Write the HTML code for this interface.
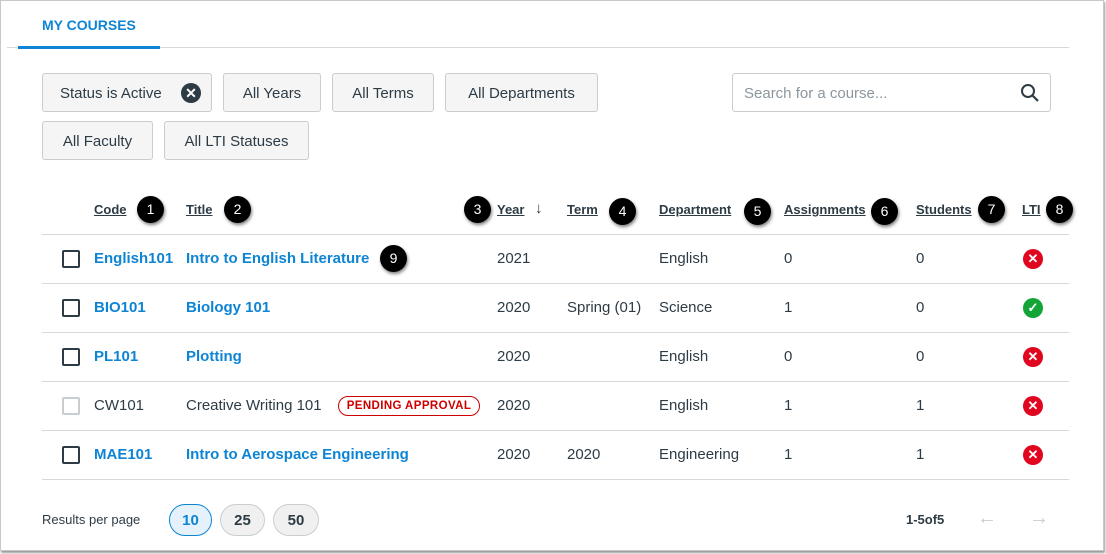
<!DOCTYPE html><html><head><style>
body{margin:0;width:1106px;height:554px;background:#fff;font-family:"Liberation Sans",sans-serif;position:relative;overflow:hidden;color:#2d3b45}
.f{position:absolute;left:0;top:0;width:1102px;height:549px;border:1px solid #c8c8c8;box-shadow:1px 2px 2px #999}
.a{position:absolute;white-space:nowrap}
.btn{position:absolute;height:37px;top:73px;background:#f5f5f5;border:1px solid #c7cdd1;border-radius:3px;font-size:15px;line-height:39px;text-align:center;color:#2d3b45}
.h{position:absolute;top:202px;font-size:13px;font-weight:bold;text-decoration:underline;color:#2d3b45}
.b{position:absolute;width:27px;height:27px;border-radius:50%;background:#000;color:#fff;font-size:14px;text-align:center;line-height:27px;box-shadow:1px 2px 3px rgba(0,0,0,.5)}
.ln{position:absolute;left:42px;width:1027px;height:1px;background:#d5d9dc}
.c{position:absolute;font-size:15px;margin-top:1px}
.bl{color:#0e84d4;font-weight:bold}
.cb{position:absolute;left:62px;width:14px;height:14px;border:2px solid #2d3b45;border-radius:2px}
.x{position:absolute;left:1023px;width:20px;height:20px;border-radius:50%;background:#e0061f;color:#fff;font-size:13px;font-weight:bold;text-align:center;line-height:20px}
.pill{position:absolute;top:504px;height:30px;border:1px solid #c7cdd1;background:#f0f0f0;border-radius:16px;font-size:15px;line-height:31px;text-align:center;font-weight:bold}
</style></head><body><div class="f"></div>
<div class="a" style="left:42px;top:17px;font-size:14px;font-weight:bold;color:#0e84d4">MY COURSES</div>
<div class="a" style="left:7px;top:47px;width:1062px;height:1px;background:#d5d9dc"></div>
<div class="a" style="left:18px;top:46px;width:142px;height:3px;background:#0e84d4"></div>
<div class="btn" style="left:42px;width:168px;text-align:left"><span style="margin-left:17px">Status is Active</span><span style="position:absolute;left:138px;top:9px;width:20px;height:20px;border-radius:50%;background:#2d3b45;color:#fff;font-size:14px;line-height:20px;text-align:center;font-weight:bold">✕</span></div>
<div class="btn" style="left:223px;width:96px">All Years</div>
<div class="btn" style="left:332px;width:100px">All Terms</div>
<div class="btn" style="left:445px;width:151px">All Departments</div>
<div class="btn" style="left:42px;top:121px;width:109px">All Faculty</div>
<div class="btn" style="left:164px;top:121px;width:143px">All LTI Statuses</div>
<div class="a" style="left:732px;top:73px;width:317px;height:37px;border:1px solid #c7cdd1;border-radius:3px"><span style="position:absolute;left:11px;top:11px;font-size:15px;color:#8b969e">Search for a course...</span>
<svg style="position:absolute;right:10px;top:9px" width="20" height="20" viewBox="0 0 20 20"><circle cx="8" cy="8" r="6" fill="none" stroke="#2d3b45" stroke-width="2"/><path d="M12.5 12.5L18 18" stroke="#2d3b45" stroke-width="2.2"/></svg></div>
<div class="h" style="left:94px">Code</div><div class="h" style="left:186px">Title</div><div class="h" style="left:497px">Year</div>
<div class="a" style="left:535px;top:200px;font-size:15px">↓</div>
<div class="h" style="left:567px">Term</div><div class="h" style="left:659px">Department</div><div class="h" style="left:784px">Assignments</div><div class="h" style="left:916px">Students</div><div class="h" style="left:1022px">LTI</div>
<div class="b" style="left:137px;top:196px">1</div><div class="b" style="left:224px;top:196px">2</div><div class="b" style="left:464px;top:196px">3</div><div class="b" style="left:609px;top:198px">4</div><div class="b" style="left:744px;top:198px">5</div><div class="b" style="left:871px;top:198px">6</div><div class="b" style="left:978px;top:196px">7</div><div class="b" style="left:1046px;top:196px">8</div><div class="b" style="left:380px;top:245px">9</div>
<div class="ln" style="top:234px"></div><div class="ln" style="top:283px"></div><div class="ln" style="top:332px"></div><div class="ln" style="top:381px"></div><div class="ln" style="top:430px"></div><div class="ln" style="top:479px"></div>
<div class="cb" style="top:250px"></div><div class="c bl" style="left:94px;top:249px">English101</div><div class="c bl" style="left:186px;top:249px">Intro to English Literature</div><div class="c" style="left:497px;top:249px">2021</div><div class="c" style="left:659px;top:249px">English</div><div class="c" style="left:784px;top:249px">0</div><div class="c" style="left:916px;top:249px">0</div><div class="x" style="top:249px">✕</div>
<div class="cb" style="top:299px"></div><div class="c bl" style="left:94px;top:298px">BIO101</div><div class="c bl" style="left:186px;top:298px">Biology 101</div><div class="c" style="left:497px;top:298px">2020</div><div class="c" style="left:567px;top:298px">Spring (01)</div><div class="c" style="left:659px;top:298px">Science</div><div class="c" style="left:784px;top:298px">1</div><div class="c" style="left:916px;top:298px">0</div><div class="x" style="top:298px;background:#13a538">✓</div>
<div class="cb" style="top:348px"></div><div class="c bl" style="left:94px;top:347px">PL101</div><div class="c bl" style="left:186px;top:347px">Plotting</div><div class="c" style="left:497px;top:347px">2020</div><div class="c" style="left:659px;top:347px">English</div><div class="c" style="left:784px;top:347px">0</div><div class="c" style="left:916px;top:347px">0</div><div class="x" style="top:347px">✕</div>
<div class="cb" style="top:397px;border-color:#c7cdd1"></div><div class="c" style="left:94px;top:396px">CW101</div><div class="c" style="left:186px;top:396px">Creative Writing 101</div>
<div class="a" style="left:338px;top:396px;height:18px;width:126px;padding:0 7px;border:1px solid #c00;border-radius:10px;color:#c00;font-size:11.5px;font-weight:bold;line-height:19px;letter-spacing:.4px;text-align:center">PENDING APPROVAL</div>
<div class="c" style="left:497px;top:396px">2020</div><div class="c" style="left:659px;top:396px">English</div><div class="c" style="left:784px;top:396px">1</div><div class="c" style="left:916px;top:396px">1</div><div class="x" style="top:396px">✕</div>
<div class="cb" style="top:446px"></div><div class="c bl" style="left:94px;top:445px">MAE101</div><div class="c bl" style="left:186px;top:445px">Intro to Aerospace Engineering</div><div class="c" style="left:497px;top:445px">2020</div><div class="c" style="left:567px;top:445px">2020</div><div class="c" style="left:659px;top:445px">Engineering</div><div class="c" style="left:784px;top:445px">1</div><div class="c" style="left:916px;top:445px">1</div><div class="x" style="top:445px">✕</div>
<div class="a" style="left:42px;top:512px;font-size:13px">Results per page</div>
<div class="pill" style="left:169px;width:41px;background:#e5f2fc;border-color:#0e84d4;color:#0e84d4">10</div>
<div class="pill" style="left:220px;width:43px">25</div><div class="pill" style="left:273px;width:44px">50</div>
<div class="a" style="left:906px;top:512px;font-size:13px;font-weight:bold">1-5of5</div>
<div class="a" style="left:977px;top:507px;font-size:20px;color:#c7cdd1">←</div><div class="a" style="left:1029px;top:507px;font-size:20px;color:#c7cdd1">→</div>
</body></html>
